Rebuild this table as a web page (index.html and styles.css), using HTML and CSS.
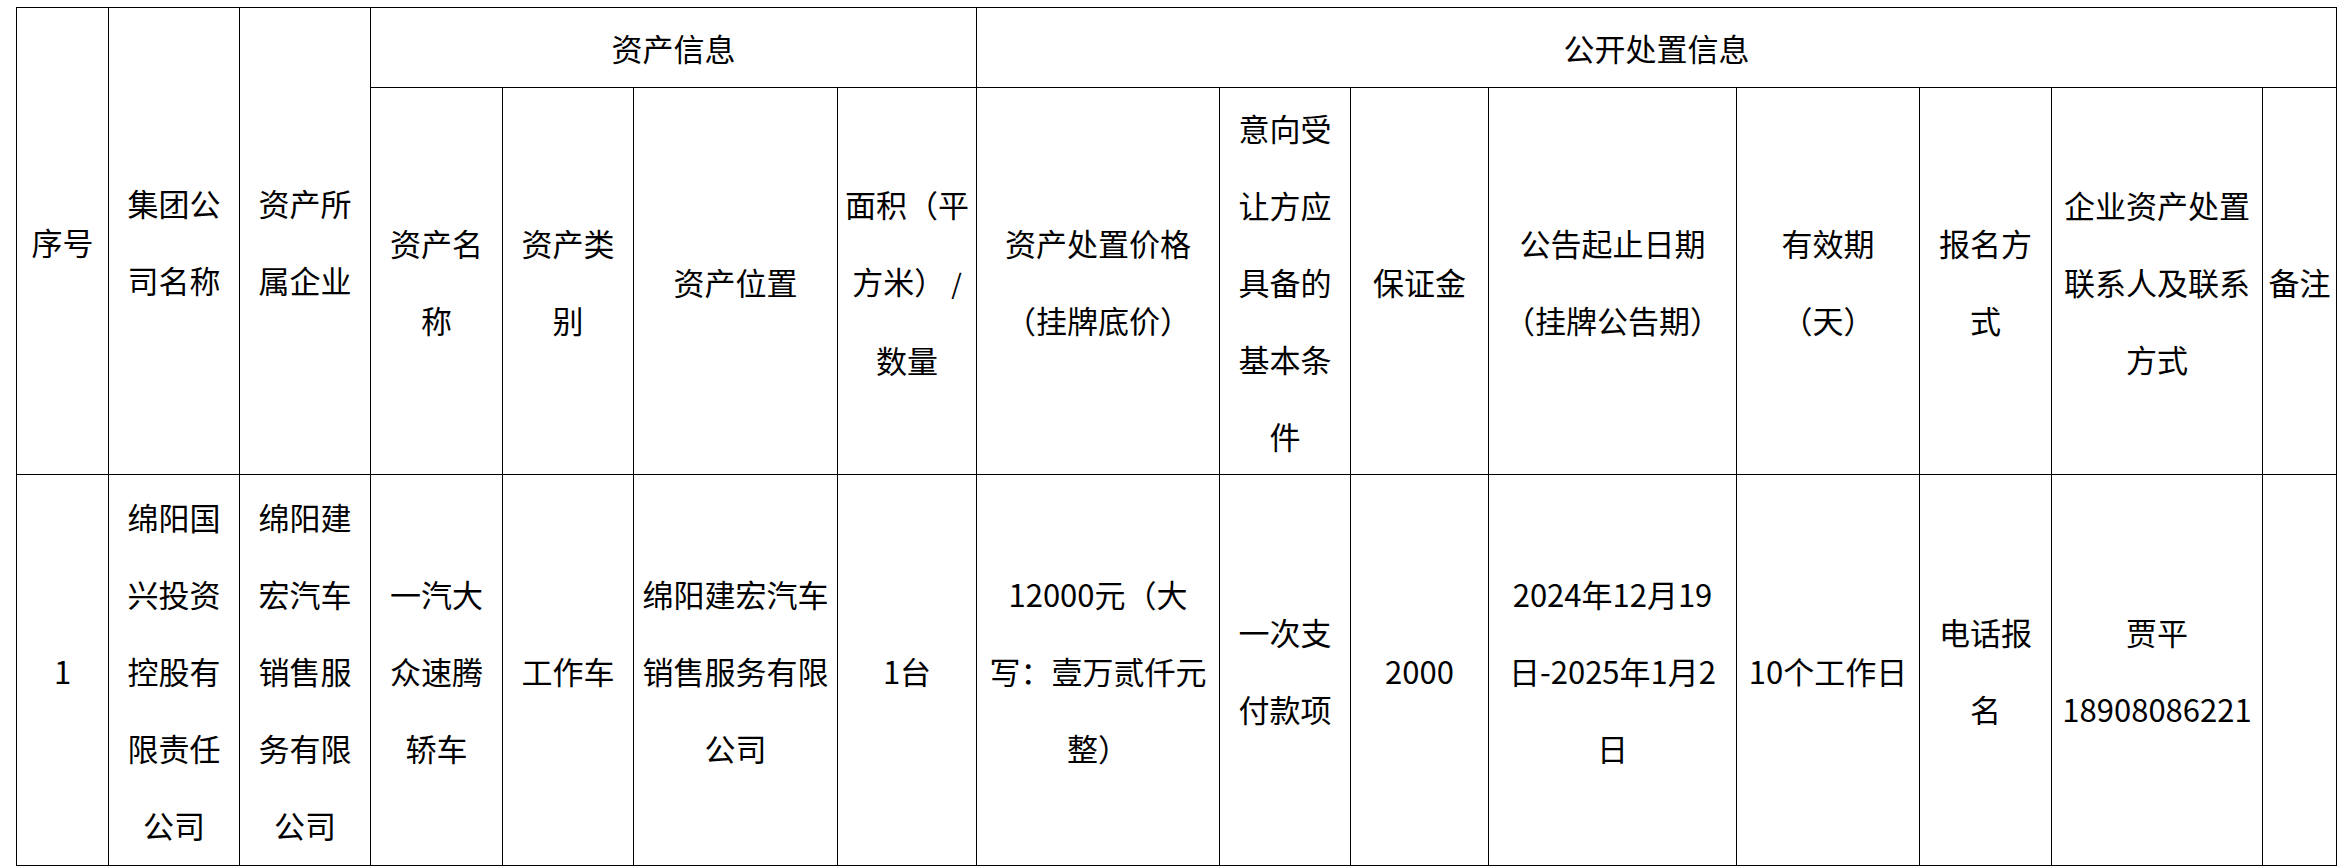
FILE: index.html
```html
<!DOCTYPE html>
<html lang="zh-CN">
<head>
<meta charset="utf-8">
<title>资产处置信息</title>
<link rel="stylesheet" href="styles.css">
</head>
<body>
<table class="grid">
  <colgroup>
    <col class="w92"><col class="w131"><col class="w131"><col class="w132"><col class="w131">
    <col class="w204"><col class="w139"><col class="w243"><col class="w131"><col class="w138">
    <col class="w248"><col class="w183"><col class="w132"><col class="w211"><col class="w74">
  </colgroup>
  <tr class="r1">
    <td rowspan="2">序号</td>
    <td rowspan="2">集团公<br>司名称</td>
    <td rowspan="2">资产所<br>属企业</td>
    <td colspan="4">资产信息</td>
    <td colspan="8">公开处置信息</td>
  </tr>
  <tr class="r2">
    <td>资产名<br>称</td>
    <td>资产类<br>别</td>
    <td>资产位置</td>
    <td>面积（平<br>方米）<span class="slash">/</span><br>数量</td>
    <td>资产处置价格<br>（挂牌底价）</td>
    <td>意向受<br>让方应<br>具备的<br>基本条<br>件</td>
    <td>保证金</td>
    <td>公告起止日期<br>（挂牌公告期）</td>
    <td>有效期<br>（天）</td>
    <td>报名方<br>式</td>
    <td>企业资产处置<br>联系人及联系<br>方式</td>
    <td>备注</td>
  </tr>
  <tr class="r3">
    <td>1</td>
    <td>绵阳国<br>兴投资<br>控股有<br>限责任<br>公司</td>
    <td>绵阳建<br>宏汽车<br>销售服<br>务有限<br>公司</td>
    <td>一汽大<br>众速腾<br>轿车</td>
    <td>工作车</td>
    <td>绵阳建宏汽车<br>销售服务有限<br>公司</td>
    <td>1台</td>
    <td>12000元（大<br>写：壹万贰仟元<br>整）</td>
    <td>一次支<br>付款项</td>
    <td>2000</td>
    <td>2024年12月19<br>日-2025年1月2<br>日</td>
    <td>10个工作日</td>
    <td>电话报<br>名</td>
    <td>贾平<br>18908086221</td>
    <td></td>
  </tr>
</table>
</body>
</html>
```

FILE: styles.css
```css
html, body {
  margin: 0;
  padding: 0;
  background: #ffffff;
}

body {
  padding: 7px 0 0 16px;
  font-family: "Noto Sans CJK SC", "Noto Sans", sans-serif;
  color: #000000;
}

.grid {
  border-collapse: collapse;
  table-layout: fixed;
  width: 2321px;
}

.grid td {
  border: 1px solid #000000;
  padding: 0;
  text-align: center;
  vertical-align: middle;
  white-space: nowrap;
  font-size: 31px;
  line-height: 77px;
  overflow: visible;
}

.slash {
  display: inline-block;
  margin-left: 6px;
  font-size: 27px;
}

.r1 { height: 80px; }
.r2 { height: 387px; }
.r3 { height: 391px; }

.w92 { width: 92px; }
.w131 { width: 131px; }
.w132 { width: 132px; }
.w204 { width: 204px; }
.w139 { width: 139px; }
.w243 { width: 243px; }
.w138 { width: 138px; }
.w248 { width: 248px; }
.w183 { width: 183px; }
.w211 { width: 211px; }
.w74 { width: 74px; }
```
